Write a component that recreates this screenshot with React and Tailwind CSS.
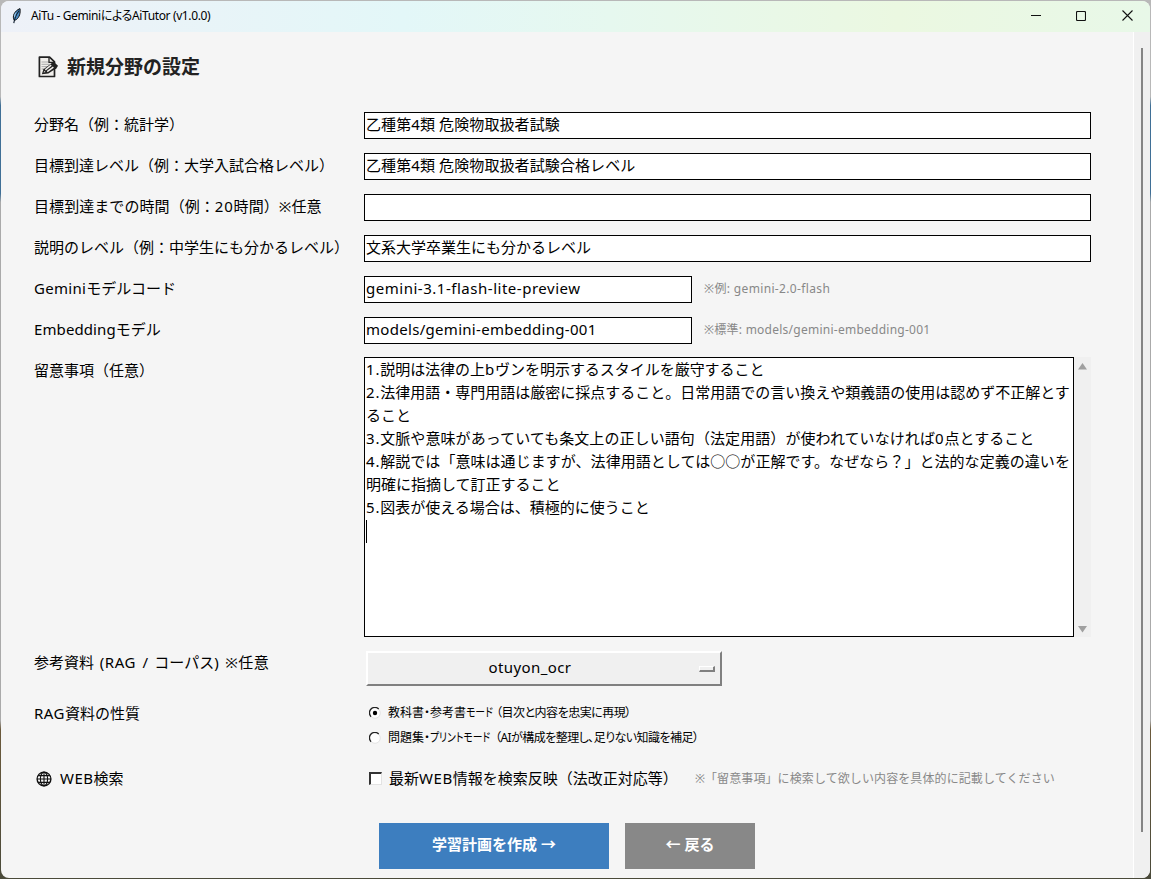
import React, { useState } from "react";

const NOTES = [
  { text: "1.説明は法律の上bヴンを明示するスタイルを厳守すること", className: "-tracking-[0.03px]" },
  { text: "2.法律用語・専門用語は厳密に採点すること。日常用語での言い換えや類義語の使用は認めず不正解とす" },
  { text: "ること" },
  { text: "3.文脈や意味があっていても条文上の正しい語句（法定用語）が使われていなければ0点とすること", className: "tracking-[0.08px]" },
  { text: "4.解説では「意味は通じますが、法律用語としては○○が正解です。なぜなら？」と法的な定義の違いを", className: "tracking-[0.05px]" },
  { text: "明確に指摘して訂正すること" },
  { text: "5.図表が使える場合は、積極的に使うこと" },
];

// Latin runs are set a little looser than the Japanese around them
function Mixed({ children }) {
  return children.split(/([\x21-\x7e]+)/).map((part, i) =>
    i % 2 ? <span key={i} className="tracking-[0.8px]">{part}</span> : part
  );
}

function FeatherIcon() {
  return (
    <svg width="12" height="16" viewBox="0 0 12 16" className="shrink-0">
      <path d="M3.2 12.2C1 8.5 3.2 3 9 .6c.6 4.2-.4 8.6-3.6 10.9-.7.5-1.4.7-2.2.7Z" fill="#4b8cc4" stroke="#111" strokeWidth="1" />
      <path d="M8.2 2.5C5.8 5.6 3.8 9 2.8 15.2" fill="none" stroke="#0b1a2a" strokeWidth="1.1" />
      <path d="M4.8 4.8C3.8 6.2 3.5 7.8 3.7 9" fill="none" stroke="#a9d4f2" strokeWidth="1" />
    </svg>
  );
}

function MemoIcon() {
  return (
    <svg width="22" height="22" viewBox="0 0 22 22" className="shrink-0">
      <path d="M2.4 1.2h10.2l4.9 4.6v14.7H2.4Z" fill="#f1efec" stroke="#222" strokeWidth="1.7" strokeLinejoin="round" />
      <path d="M4.5 6h7M4.5 8.3h8M4.5 10.6h6M4.5 12.9h3" stroke="#aaa" strokeWidth="1" />
      <path d="M12 1.6v4.8h5" fill="none" stroke="#222" strokeWidth="1.3" />
      <path d="m4.8 18.2 1.7-5 8.3-6.3 2-.9 4.2 3.8-1.5 2.4-8.2 5.4Z" fill="#222" />
      <path d="m8.3 13.8 5.9-4.6M10.2 15.6l6.2-4.4" stroke="#f1efec" strokeWidth="1.5" />
      <path d="m6.6 16.6.6-1.7 1.4 1.2Z" fill="#f1efec" />
    </svg>
  );
}

function GlobeIcon() {
  return (
    <svg width="16" height="16" viewBox="0 0 16 16" fill="none" stroke="#111" strokeWidth="1.1" className="shrink-0">
      <circle cx="8" cy="8" r="6.9" strokeWidth="1.4" />
      <ellipse cx="8" cy="8" rx="3.6" ry="6.9" />
      <path d="M8 1v14M1 8h14M2 4.6h12M2 11.4h12" />
    </svg>
  );
}

function TitleBar() {
  return (
    <header className="flex h-[31px] shrink-0 items-center bg-[linear-gradient(90deg,#eef1f8_0%,#e3f7f8_35%,#e6f8ef_53%,#ebf8e1_78%,#e8f8e8_100%)] pb-[2px] pl-[10px]">
      <FeatherIcon />
      <span className="ml-[8px] text-[12px] leading-[16px] tracking-[-0.38px] whitespace-pre [font-feature-settings:'palt']">
        AiTu - GeminiによるAiTutor (v1.0.0)
      </span>
      <div className="ml-auto flex">
        <button aria-label="最小化" className="grid h-[29px] w-[45px] place-items-center">
          <svg width="10" height="10" stroke="#111"><path d="M0 4.5h10" /></svg>
        </button>
        <button aria-label="最大化" className="grid h-[29px] w-[46px] place-items-center">
          <svg width="10" height="10" fill="none" stroke="#111" strokeWidth="1.1"><rect x=".5" y=".5" width="9" height="9" rx="1" /></svg>
        </button>
        <button aria-label="閉じる" className="grid h-[29px] w-[46px] place-items-center">
          <svg width="11" height="11" stroke="#111" strokeWidth="1.1"><path d="m.5.5 10 10M10.5.5l-10 10" /></svg>
        </button>
      </div>
    </header>
  );
}

function Row({ label, className = "h-[41px]", labelClass = "h-[27px]", children }) {
  return (
    <div className={`flex items-start ${className}`}>
      <div className={`flex w-[330px] shrink-0 items-center whitespace-pre ${labelClass}`}>{label}</div>
      {children}
    </div>
  );
}

function Entry({ defaultValue, className = "w-[727px] pb-[5px]" }) {
  return (
    <input
      type="text"
      defaultValue={defaultValue}
      className={`h-[27px] shrink-0 border border-black bg-white pl-px outline-none ${className}`}
    />
  );
}

function Radio({ checked, onChange, children }) {
  return (
    <label className="flex h-[25px] items-center">
      <input type="radio" name="rag" checked={checked} onChange={onChange} className="sr-only" />
      <svg width="12" height="12" viewBox="0 0 12 12" className="shrink-0">
        <circle cx="6" cy="6" r="5.3" fill="#fff" stroke="#e3e3e3" />
        <path d="M2 9.7A5.2 5.2 0 0 1 9.7 2" fill="none" stroke="#222" strokeWidth="1.3" />
        {checked && <circle cx="6" cy="6" r="2.2" fill="#000" />}
      </svg>
      <span className="ml-[7px] flex text-[12px] whitespace-nowrap [font-feature-settings:'palt']">{children}</span>
    </label>
  );
}

export default function App() {
  const [mode, setMode] = useState("textbook");
  const [web, setWeb] = useState(false);

  return (
    <div className="h-[879px] w-[1151px] overflow-hidden bg-[linear-gradient(180deg,#b8b8b8_0%,#b8b8b8_11%,#3f6f96_12%,#3f6f96_22%,#aaaaaa_23%,#aaaaaa_82%,#6b5a3c_83%,#4a4a3a_100%)] font-['Noto_Sans','Noto_Sans_CJK_JP',sans-serif] text-[15px] leading-[23px] text-black">
      <div className="flex h-full p-px">
        <div className="flex w-full flex-col overflow-hidden rounded-[8px] bg-[#f5f5f5]">
          <TitleBar />
          <div className="flex min-h-0 flex-1">
            <main className="w-[1132px] shrink-0 pl-[33px]">
              <h1 className="flex h-[70px] items-center pl-[3px] text-[19px] font-bold text-[#222]">
                <MemoIcon />
                <span className="ml-[8px]">新規分野の設定</span>
              </h1>

              <div className="pt-[10px]">
                <Row label="分野名（例：統計学）" labelClass="h-[25px]">
                  <Entry defaultValue="乙種第4類 危険物取扱者試験" className="w-[727px] pb-[5px] tracking-[0.1px]" />
                </Row>
                <Row label="目標到達レベル（例：大学入試合格レベル）" labelClass="h-[25px]">
                  <Entry defaultValue="乙種第4類 危険物取扱者試験合格レベル" className="w-[727px] pb-[5px] tracking-[0.1px]" />
                </Row>
                <Row label={<span className="tracking-[0.07px]"><Mixed>目標到達までの時間（例：20時間）※任意</Mixed></span>} labelClass="h-[25px]">
                  <Entry defaultValue="" />
                </Row>
                <Row label="説明のレベル（例：中学生にも分かるレベル）" labelClass="h-[25px]">
                  <Entry defaultValue="文系大学卒業生にも分かるレベル" />
                </Row>
                <Row label={<><span className="tracking-[0.3px]">Gemini</span>モデルコード</>} labelClass="h-[25px]">
                  <Entry defaultValue="gemini-3.1-flash-lite-preview" className="w-[328px] pb-[3px] tracking-[0.52px]" />
                  <span className="ml-[12px] text-[12px] leading-[25px] tracking-[0.35px] text-[#888]">※例: gemini-2.0-flash</span>
                </Row>
                <Row label={<><span className="tracking-[0.1px]">Embedding</span>モデル</>} className="h-[40px]" labelClass="h-[25px]">
                  <Entry defaultValue="models/gemini-embedding-001" className="w-[328px] pb-[3px] tracking-[0.3px]" />
                  <span className="ml-[12px] text-[12px] leading-[25px] tracking-[0.25px] text-[#888]">※標準: models/gemini-embedding-001</span>
                </Row>
                <Row label="留意事項（任意）" className="h-[292px]">
                  <div className="h-[280px] w-[710px] shrink-0 border border-black bg-white pl-px">
                    {NOTES.map(({ text, className = "" }) => (
                      <p key={text} className={`h-[23px] whitespace-nowrap ${className}`}><Mixed>{text}</Mixed></p>
                    ))}
                    <div className="mt-px h-[23px] w-px bg-black" />
                  </div>
                  <div className="flex h-[280px] w-[17px] flex-col items-center justify-between bg-[#f0f0f0] pt-[6px] pb-[4px]">
                    <svg width="9" height="7" fill="#a0a0a0"><path d="M4.5 0 9 6.5H0Z" /></svg>
                    <svg width="9" height="7" fill="#a0a0a0"><path d="M4.5 6.5 9 0H0Z" /></svg>
                  </div>
                </Row>
                <Row
                  label={<span className="[word-spacing:1.8px]">参考資料 <span className="tracking-[0.6px]">(RAG /</span> コーパス<span className="tracking-[0.8px]">)</span> <span className="tracking-[0.5px]">※任意</span></span>}
                  className="h-[51px]"
                >
                  <button className="mt-[2px] ml-[2px] flex h-[35px] w-[356px] items-center border-2 border-t-white border-r-[#808080] border-b-[#808080] border-l-white bg-[#f0f0f0] pr-[5px]">
                    <span className="flex-1 pr-[7px] pb-[2px] text-center tracking-[0.4px]">otuyon_ocr</span>
                    <span className="h-[6px] w-[16px] border-t border-r-2 border-b-2 border-l border-t-white border-r-[#808080] border-b-[#808080] border-l-white" />
                  </button>
                </Row>
                <Row label={<><span className="tracking-[0.5px]">RAG</span>資料の性質</>} className="h-[65px]">
                  <div className="pl-[5px]">
                    <Radio checked={mode === "textbook"} onChange={() => setMode("textbook")}>
                      教科書・参考書
                      <span className="w-[26px] origin-left scale-x-[0.82]">モード</span>
                      <span className="ml-[4px] tracking-[-0.5px]">（目次と内容を忠実に再現）</span>
                    </Radio>
                    <Radio checked={mode === "drill"} onChange={() => setMode("drill")}>
                      問題集・
                      <span className="w-[60px] origin-left scale-x-[0.82]">プリントモード</span>
                      <span className="ml-[5px] tracking-[-0.55px]">（AIが構成を整理し、足りない知識を補足）</span>
                    </Radio>
                  </div>
                </Row>
                <Row
                  label={<><span className="mr-[8px] ml-[2px]"><GlobeIcon /></span><span className="tracking-[0.5px]">WEB</span>検索</>}
                  className="h-[58px]"
                >
                  <label className="flex h-[27px] items-center pl-[5px]">
                    <input type="checkbox" checked={web} onChange={(e) => setWeb(e.target.checked)} className="size-[13px] appearance-none border-t-2 border-r border-b border-l-2 border-t-[#333] border-r-[#e3e3e3] border-b-[#e3e3e3] border-l-[#333] bg-white" />
                    <span className="ml-[7px] whitespace-nowrap">最新<span className="tracking-[0.6px]">WEB</span>情報を検索反映（法改正対応等）</span>
                  </label>
                  <span className="ml-[17px] text-[12px] leading-[27px] tracking-[0.1px] whitespace-nowrap text-[#888]">
                    ※「留意事項」に検索して欲しい内容を具体的に記載してください
                  </span>
                </Row>
              </div>

              <div className="flex gap-4 pl-[345px] font-bold text-white">
                <button className="h-[46px] w-[230px] bg-[#3d7ebf] pb-[4px]">学習計画を作成 →</button>
                <button className="h-[46px] w-[130px] bg-[#888] pb-[4px]">← 戻る</button>
              </div>
            </main>
            <aside className="flex flex-1 justify-center border-l border-white bg-[#f0f0f0] pt-[16px]">
              <div className="h-[784px] w-[2px] bg-[#858585]" />
            </aside>
          </div>
        </div>
      </div>
    </div>
  );
}
